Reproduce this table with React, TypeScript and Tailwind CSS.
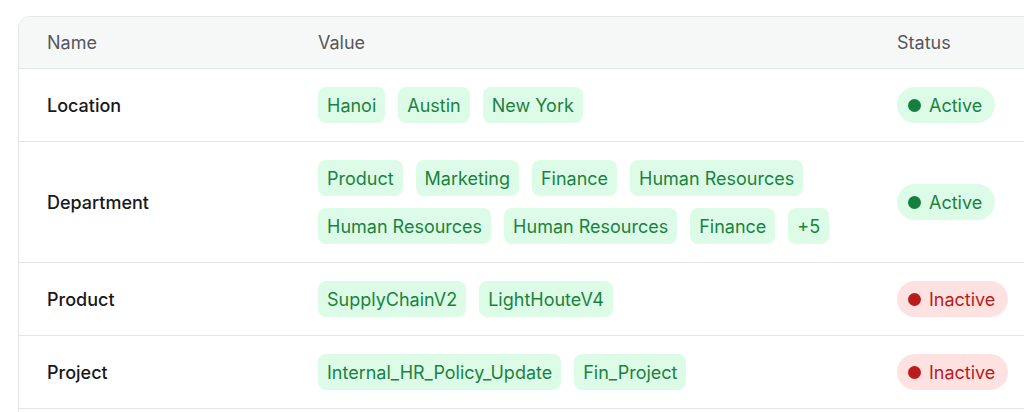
import React from "react";

type Row = { name: string; values: string[][]; active: boolean };

const rows: Row[] = [
  { name: "Location", values: [["Hanoi", "Austin", "New York"]], active: true },
  {
    name: "Department",
    values: [
      ["Product", "Marketing", "Finance", "Human Resources"],
      ["Human Resources", "Human Resources", "Finance", "+5"],
    ],
    active: true,
  },
  { name: "Product", values: [["SupplyChainV2", "LightHouteV4"]], active: false },
  { name: "Project", values: [["Internal_HR_Policy_Update", "Fin_Project"]], active: false },
];

function Chip({ label }: { label: string }) {
  return (
    <span className="inline-flex h-9 items-center rounded-lg bg-[#dcfce7] px-[9px] text-[18px] text-[#1a8240]">
      {label}
    </span>
  );
}

function Status({ active }: { active: boolean }) {
  return active ? (
    <span className="inline-flex h-9 items-center gap-[8px] rounded-full bg-[#dcfce7] pl-[11px] pr-[13px] text-[18px] text-[#1a8240]">
      <span className="h-[13px] w-[13px] shrink-0 rounded-full bg-[#15803d]" />
      Active
    </span>
  ) : (
    <span className="inline-flex h-9 items-center gap-[8px] rounded-full bg-[#fee2e2] pl-[11px] pr-[13px] text-[18px] text-[#b91c1c]">
      <span className="h-[13px] w-[13px] shrink-0 rounded-full bg-[#b91c1c]" />
      Inactive
    </span>
  );
}

export default function App() {
  return (
    <div
      className="relative h-[412px] w-[1024px] overflow-hidden bg-white"
      style={{ fontFamily: "Inter, 'Noto Sans', sans-serif" }}
    >
      <div className="absolute left-[18px] top-[16px] w-[1060px] overflow-hidden rounded-tl-xl border border-[#e4e6e5]">
        <div className="grid h-[52px] grid-cols-[271px_579px_1fr] items-center border-b border-[#e4e6e5] bg-[#f6f8f7] text-[18px] text-[#55575a]">
          <div className="pl-[28px]">Name</div>
          <div className="pl-[28px]">Value</div>
          <div className="pl-[28px]">Status</div>
        </div>
        {rows.map((r, i) => (
          <div
            key={i}
            className="grid grid-cols-[271px_579px_1fr] items-center border-b border-[#e4e6e5] bg-white py-[18px]"
          >
            <div className="pl-[28px] text-[18px] font-medium text-[#18181b]">{r.name}</div>
            <div className="flex flex-col gap-3 pl-[28px]">
              {r.values.map((line, j) => (
                <div key={j} className="flex gap-[13px]">
                  {line.map((v, k) => (
                    <Chip key={k} label={v} />
                  ))}
                </div>
              ))}
            </div>
            <div className="pl-[28px]">
              <Status active={r.active} />
            </div>
          </div>
        ))}
        <div className="h-[40px] bg-white" />
      </div>
    </div>
  );
}
